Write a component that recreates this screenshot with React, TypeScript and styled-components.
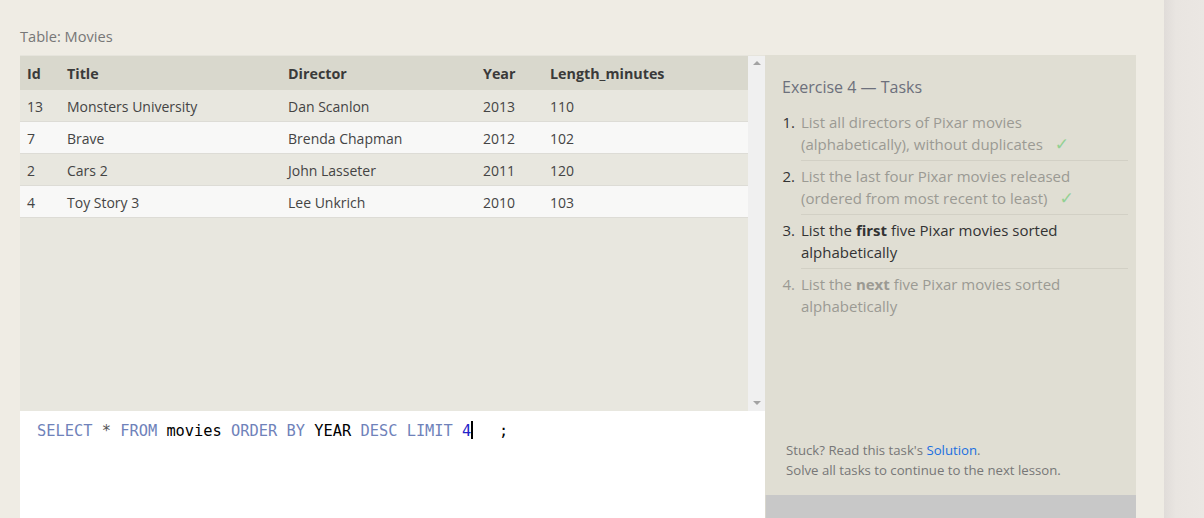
import React from "react";
import styled, { createGlobalStyle } from "styled-components";

const GlobalStyle = createGlobalStyle`
  html, body {
    margin: 0;
    padding: 0;
    height: 100%;
    overflow: hidden;
    background: #efece4;
    font-family: "Open Sans", "Liberation Sans", sans-serif;
  }
  * { box-sizing: border-box; }
`;

const Page = styled.div`
  display: flex;
  width: 1204px;
  height: 518px;
  overflow: hidden;
`;

const Main = styled.div`
  width: 1164px;
  padding: 26px 0 0 20px;
  display: flex;
  flex-direction: column;
`;

const SideStrip = styled.div`
  width: 40px;
  background: linear-gradient(to right, #e0dcd9 0px, #e9e5e1 12px, #ebe7e3 40px);
`;

const Caption = styled.div`
  font-size: 14.6px;
  line-height: 20px;
  color: #777;
  margin-bottom: 9px;
`;

const Workspace = styled.div`
  display: flex;
  width: 1116px;
  flex: 1;
`;

const LeftColumn = styled.div`
  width: 745px;
  display: flex;
  flex-direction: column;
`;

const TableArea = styled.div`
  height: 356px;
  display: flex;
  background: #e8e7df;
  border-top: 1px solid #e6e4dc;
`;

const TableScroll = styled.div`
  flex: 1;
  display: flex;
  flex-direction: column;
`;

const Row = styled.div<{ $variant: "head" | "odd" | "even" }>`
  display: grid;
  grid-template-columns: 40px 221px 195px 67px 1fr;
  align-items: center;
  height: ${(p) => (p.$variant === "head" ? "34px" : "32px")};
  padding-top: ${(p) => (p.$variant === "head" ? "0" : "1px")};
  background: ${(p) =>
    p.$variant === "head" ? "#d9d8cd" : p.$variant === "odd" ? "#e8e7df" : "#f8f8f7"};
  border-bottom: ${(p) => (p.$variant === "head" ? "none" : "1px solid #dddcd6")};
  font-size: ${(p) => (p.$variant === "head" ? "14.3px" : "14px")};
  color: ${(p) => (p.$variant === "head" ? "#3a3a3a" : "#444")};
  font-weight: ${(p) => (p.$variant === "head" ? 700 : 400)};
`;

const Cell = styled.div`
  padding-left: 7px;
  white-space: nowrap;
`;

const Scrollbar = styled.div`
  width: 17px;
  background: #f0f0f0;
  display: flex;
  flex-direction: column;
  justify-content: space-between;
  align-items: center;
  padding: 5px 0 6px;
`;

const Arrow = styled.div<{ $dir: "up" | "down" }>`
  width: 0;
  height: 0;
  border-left: 4px solid transparent;
  border-right: 4px solid transparent;
  ${(p) =>
    p.$dir === "up"
      ? "border-bottom: 4px solid #a3a3a3;"
      : "border-top: 4px solid #a3a3a3;"}
`;

const Editor = styled.div`
  flex: 1;
  background: #fff;
  padding: 10px 17px;
  font-family: "DejaVu Sans Mono", "Liberation Mono", monospace;
  font-size: 15.35px;
  line-height: 20px;
  white-space: pre;
  color: #000;
`;

const Kw = styled.span`
  color: #6f82ba;
`;
const Num = styled.span`
  color: #2323c8;
`;
const Op = styled.span`
  color: #555;
`;
const Caret = styled.span`
  display: inline-block;
  width: 2px;
  height: 18px;
  background: #000;
  vertical-align: -3px;
  margin-right: -2px;
`;

const TasksColumn = styled.div`
  width: 371px;
  display: flex;
  flex-direction: column;
`;

const TasksPanel = styled.div`
  flex: 1;
  background: #e0ded3;
  padding: 20px 8px 15px 17px;
  display: flex;
  flex-direction: column;
`;

const TasksTitle = styled.div`
  font-size: 16px;
  line-height: 24px;
  color: #6d707c;
  margin-bottom: 8px;
`;

const TaskList = styled.ol`
  list-style: none;
  margin: 0;
  padding: 0;
  flex: 1;
`;

const Task = styled.li`
  display: grid;
  grid-template-columns: 13px 1fr;
  column-gap: 6px;
  font-size: 15px;
  line-height: 22px;
`;

const Marker = styled.span<{ $state: "done" | "active" | "todo" }>`
  text-align: right;
  padding-top: 4px;
  white-space: nowrap;
  color: ${(p) => (p.$state === "todo" ? "#9b9a93" : "#333")};
`;

const TaskText = styled.span<{ $state: "done" | "active" | "todo"; $last?: boolean }>`
  padding: 4px 0 5px;
  border-bottom: ${(p) => (p.$last ? "none" : "1px solid #d2d0c5")};
  color: ${(p) => (p.$state === "active" ? "#333" : "#9b9a93")};
  b {
    font-weight: 700;
  }
`;

const Check = styled.span`
  display: inline-block;
  color: #93d193;
  font-size: 17px;
  line-height: 18px;
  margin-left: 12px;
  font-family: "DejaVu Sans", sans-serif;
`;

const Footer = styled.div`
  font-size: 13.2px;
  line-height: 20px;
  color: #777;
  padding-left: 4px;
`;

const Link = styled.a`
  color: #1a6fe0;
  text-decoration: none;
`;

const GrayBar = styled.div`
  height: 23px;
  background: #c8c8c8;
  border-left: 1px solid #d8d6cc;
`;

const rows = [
  ["13", "Monsters University", "Dan Scanlon", "2013", "110"],
  ["7", "Brave", "Brenda Chapman", "2012", "102"],
  ["2", "Cars 2", "John Lasseter", "2011", "120"],
  ["4", "Toy Story 3", "Lee Unkrich", "2010", "103"],
];

export default function App() {
  return (
    <>
      <GlobalStyle />
      <Page>
        <Main>
          <Caption>Table: Movies</Caption>
          <Workspace>
            <LeftColumn>
              <TableArea>
                <TableScroll>
                  <Row $variant="head">
                    <Cell>Id</Cell>
                    <Cell>Title</Cell>
                    <Cell>Director</Cell>
                    <Cell>Year</Cell>
                    <Cell>Length_minutes</Cell>
                  </Row>
                  {rows.map((r, i) => (
                    <Row key={r[0]} $variant={i % 2 === 0 ? "odd" : "even"}>
                      {r.map((c, j) => (
                        <Cell key={j}>{c}</Cell>
                      ))}
                    </Row>
                  ))}
                </TableScroll>
                <Scrollbar>
                  <Arrow $dir="up" />
                  <Arrow $dir="down" />
                </Scrollbar>
              </TableArea>
              <Editor>
                <Kw>SELECT</Kw> <Op>*</Op> <Kw>FROM</Kw> movies <Kw>ORDER</Kw> <Kw>BY</Kw> YEAR{" "}
                <Kw>DESC</Kw> <Kw>LIMIT</Kw> <Num>4</Num>
                <Caret />
                {"   ;"}
              </Editor>
            </LeftColumn>
            <TasksColumn>
              <TasksPanel>
                <TasksTitle>Exercise 4 — Tasks</TasksTitle>
                <TaskList>
                  <Task>
                    <Marker $state="done">1.</Marker>
                    <TaskText $state="done">
                      List all directors of Pixar movies (alphabetically), without duplicates
                      <Check>✓</Check>
                    </TaskText>
                  </Task>
                  <Task>
                    <Marker $state="done">2.</Marker>
                    <TaskText $state="done">
                      List the last four Pixar movies released (ordered from most recent to least)
                      <Check>✓</Check>
                    </TaskText>
                  </Task>
                  <Task>
                    <Marker $state="active">3.</Marker>
                    <TaskText $state="active">
                      List the <b>first</b> five Pixar movies sorted alphabetically
                    </TaskText>
                  </Task>
                  <Task>
                    <Marker $state="todo">4.</Marker>
                    <TaskText $state="todo" $last>
                      List the <b>next</b> five Pixar movies sorted alphabetically
                    </TaskText>
                  </Task>
                </TaskList>
                <Footer>
                  Stuck? Read this task's <Link href="#">Solution</Link>.
                  <br />
                  Solve all tasks to continue to the next lesson.
                </Footer>
              </TasksPanel>
              <GrayBar />
            </TasksColumn>
          </Workspace>
        </Main>
        <SideStrip />
      </Page>
    </>
  );
}
